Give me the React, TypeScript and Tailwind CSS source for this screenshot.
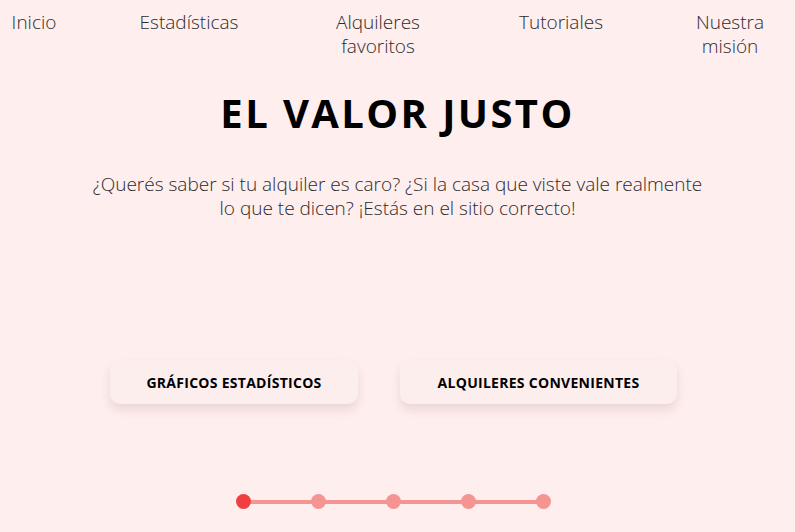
import React from "react";

const navItems = [
  { label: "Inicio", cls: "w-[68px]" },
  { label: "Estadísticas", cls: "w-[120px] ml-[61px]" },
  { label: "Alquileres favoritos", cls: "w-[110px] ml-[74px]" },
  { label: "Tutoriales", cls: "w-[100px] ml-[78px]" },
  { label: "Nuestra misión", cls: "w-[90px] ml-[74px]" },
];

const steps = [0, 1, 2, 3, 4];

export default function App() {
  return (
    <div className="min-h-screen w-full bg-[#ffeeee] text-[#2b2b2b] font-['Open_Sans',sans-serif] flex flex-col items-center">
      {/* top navigation */}
      <nav className="w-full flex items-start pt-[10px]">
        {navItems.map((item) => (
          <a key={item.label} className={`${item.cls} text-center text-[19px] leading-[24px] font-light`}>
            {item.label}
          </a>
        ))}
      </nav>

      <h1 className="mt-[31px] text-[40px] leading-[48px] font-bold tracking-[0.06em] text-black">
        EL VALOR JUSTO
      </h1>

      <p className="mt-[35px] w-[625px] text-center text-[19px] leading-[24px] font-light">
        ¿Querés saber si tu alquiler es caro? ¿Si la casa que viste vale realmente lo que te dicen? ¡Estás en el sitio correcto!
      </p>

      <div className="mt-[140px] mr-[8px] flex gap-[42px]">
        <button className="w-[248px] h-[44px] rounded-[10px] bg-[#fdeeee] shadow-[0_6px_10px_rgba(120,80,80,0.15)] text-[14px] font-bold tracking-[0.02em] text-black">
          GRÁFICOS ESTADÍSTICOS
        </button>
        <button className="w-[277px] h-[44px] rounded-[10px] bg-[#fdeeee] shadow-[0_6px_10px_rgba(120,80,80,0.15)] text-[14px] font-bold tracking-[0.02em] text-black">
          ALQUILERES CONVENIENTES
        </button>
      </div>

      {/* step indicator */}
      <div className="mt-[90px] mr-[9px] relative flex items-center gap-[60px]">
        <div className="absolute left-[7px] right-[7px] top-1/2 -translate-y-1/2 h-[4px] bg-[#f59592]" />
        {steps.map((s) => (
          <span
            key={s}
            className={`relative w-[15px] h-[15px] rounded-full ${s === 0 ? "bg-[#f13f41]" : "bg-[#f59592]"}`}
          />
        ))}
      </div>
    </div>
  );
}
